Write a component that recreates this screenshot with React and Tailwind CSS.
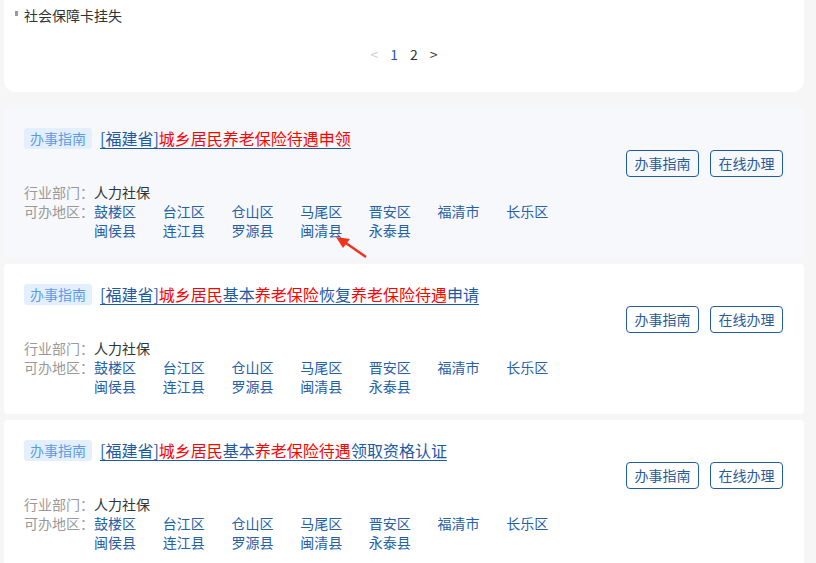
const areas = [
  "鼓楼区",
  "台江区",
  "仓山区",
  "马尾区",
  "晋安区",
  "福清市",
  "长乐区",
  "闽侯县",
  "连江县",
  "罗源县",
  "闽清县",
  "永泰县",
];

const items = [
  {
    id: 1,
    parts: [
      ["[福建省]", false],
      ["城乡居民养老保险待遇申领", true],
    ],
    active: true,
  },
  {
    id: 2,
    parts: [
      ["[福建省]", false],
      ["城乡居民", true],
      ["基本", false],
      ["养老保险", true],
      ["恢复", false],
      ["养老保险待遇", true],
      ["申请", false],
    ],
  },
  {
    id: 3,
    parts: [
      ["[福建省]", false],
      ["城乡居民", true],
      ["基本", false],
      ["养老保险待遇", true],
      ["领取资格认证", false],
    ],
  },
];

const GuideCard = ({ item }) => {
  return (
    <div
      className={`relative flex rounded-[4px] pl-[20px] pr-[21px] pt-[20px] pb-[18px] ${
        item.active ? "bg-[#f6f8fb]" : "bg-white"
      }`}
    >
      <div className="flex-1">
        <div className="flex items-center h-[21px]">
          <span className="h-[21px] px-[6px] rounded-[3px] bg-[#e3effc] text-[#5e9be6] text-[14px] leading-[21px]">
            办事指南
          </span>
          <a className="ml-[8px] text-[16px] leading-[21px] text-[#1d5aa3] underline underline-offset-[3px] decoration-[#1d5aa3]">
            {item.parts.map(([t, red], i) => (
              <span key={i} className={red ? "text-[#ff0000]" : ""}>
                {t}
              </span>
            ))}
          </a>
        </div>
        <div className="mt-[34px] text-[14px] leading-[19px]">
          <div className="flex">
            <span className="text-[#999999] w-[70px] shrink-0">行业部门：</span>
            <span className="text-[#333333]">人力社保</span>
          </div>
          <div className="flex">
            <span className="text-[#999999] w-[70px] shrink-0">可办地区：</span>
            <div className="grid grid-cols-7 w-[481px]">
              {areas.map((a) => (
                <span key={a} className="text-[#2560a8]">
                  {a}
                </span>
              ))}
            </div>
          </div>
        </div>
      </div>
      <div className="flex gap-[11px] mt-[22px]">
        <button className="h-[27px] w-[73px] rounded-[4px] border border-[#1f5ca5] text-[#2a5a98] text-[14px]">
          办事指南
        </button>
        <button className="h-[27px] w-[73px] rounded-[4px] border border-[#1f5ca5] text-[#2a5a98] text-[14px]">
          在线办理
        </button>
      </div>
      {item.active && (
        <svg
          className="absolute left-[328px] top-[124px]"
          width="38"
          height="28"
          viewBox="0 0 38 28"
        >
          <line x1="34" y1="25" x2="11" y2="9" stroke="#f2311e" strokeWidth="2.5" />
          <polygon points="4,5 18,7 11,16" fill="#f2311e" />
        </svg>
      )}
    </div>
  );
};

const App = () => {
  return (
    <div
      className="min-h-screen w-full bg-[#f6f6f6] pl-[4px] pr-[12px]"
      style={{ fontFamily: '"Noto Sans CJK SC", "Noto Sans", sans-serif' }}
    >
      <div className="h-[92px] bg-white rounded-b-[12px] pt-[5px]">
        <div className="flex items-center pl-[11px] text-[14px] leading-[20px] text-[#333333]">
          <span className="w-[3px] h-[5px] bg-[#999999] mr-[6px] -mt-[4px]" />
          社会保障卡挂失
        </div>
        <div className="mt-[19px] flex justify-center items-center gap-[12px] text-[14px] leading-[20px]">
          <span className="text-[#cccccc]">&lt;</span>
          <span className="text-[#1d5aa3]">1</span>
          <span className="text-[#333333]">2</span>
          <span className="text-[#333333]">&gt;</span>
        </div>
      </div>
      <div className="mt-[16px] flex flex-col gap-[6px]">
        {items.map((item) => (
          <GuideCard key={item.id} item={item} />
        ))}
      </div>
    </div>
  );
};

export default App;
